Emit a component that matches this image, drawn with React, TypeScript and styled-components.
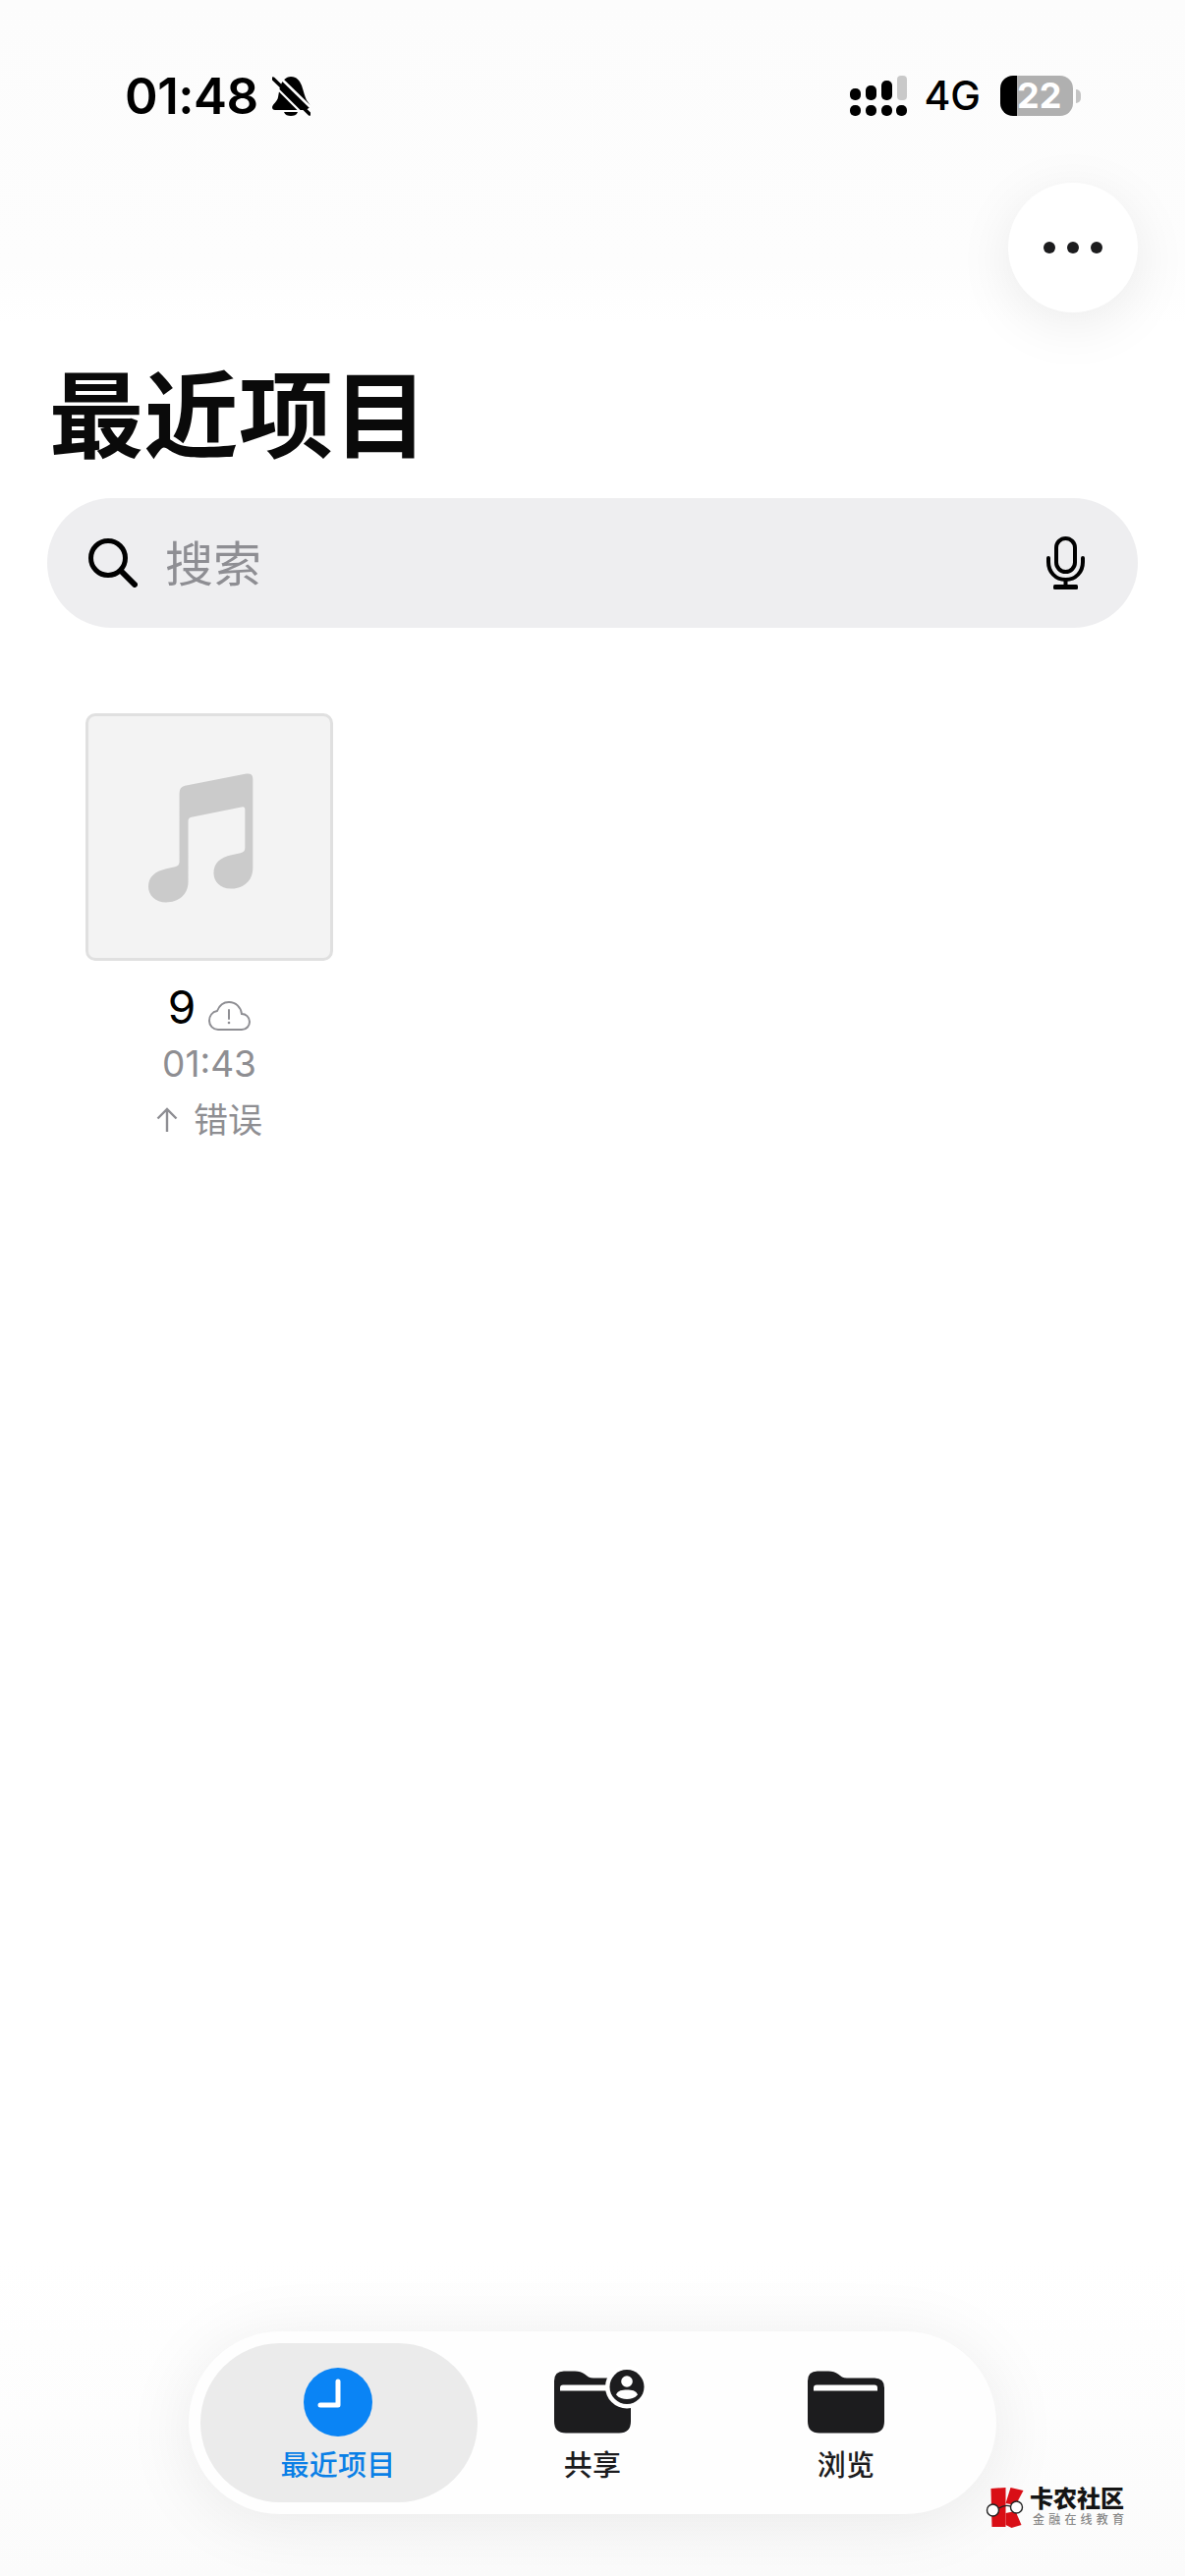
import React from "react";
import styled, { createGlobalStyle } from "styled-components";

const GlobalStyle = createGlobalStyle`
  html, body {
    margin: 0;
    padding: 0;
    background: #fff;
  }
`;

const CJK = `Inter, "Noto Sans CJK SC", sans-serif`;

const Page = styled.div`
  position: relative;
  width: 1206px;
  height: 2622px;
  overflow: hidden;
  display: flex;
  flex-direction: column;
  font-family: ${CJK};
  color: #000;
  background:
    linear-gradient(#fcfcfc 0, #fdfdfd 270px, #fff 330px, #fff 2300px, #fbfbfb 2622px);
`;

const StatusBar = styled.div`
  display: flex;
  align-items: center;
  height: 41px;
  margin-top: 77px;
  padding: 0 106px 0 127px;
`;

const Time = styled.span`
  font-size: 51px;
  line-height: 41px;
  font-weight: 600;
  letter-spacing: -0.5px;
`;

const BellIcon = styled.svg`
  width: 39px;
  height: 41px;
  margin-left: 14px;
`;

const StatusRight = styled.div`
  display: flex;
  align-items: center;
  margin-left: auto;
`;

const SignalIcon = styled.svg`
  width: 58px;
  height: 41px;
`;

const Network = styled.span`
  font-size: 41px;
  line-height: 41px;
  font-weight: 500;
  margin: 0 20px 0 17px;
`;

const Battery = styled.div`
  display: flex;
  align-items: center;
  justify-content: flex-start;
  width: 74px;
  height: 41px;
  padding-left: 17px;
  box-sizing: border-box;
  border-radius: 13px;
  background: linear-gradient(90deg, #000 17px, #b0b0b0 17px);
  color: #fff;
  font-size: 36px;
  line-height: 41px;
  font-weight: 700;
`;

const BatteryNub = styled.div`
  width: 5px;
  height: 14px;
  margin-left: 3px;
  border-radius: 0 7px 7px 0;
  background: #c4c4c4;
`;

const ActionRow = styled.div`
  display: flex;
  justify-content: flex-end;
  margin-top: 68px;
  padding-right: 48px;
`;

const MoreButton = styled.div`
  display: flex;
  align-items: center;
  justify-content: center;
  gap: 12px;
  width: 132px;
  height: 132px;
  border-radius: 50%;
  background: #fff;
  box-shadow: 0 12px 56px rgba(0, 0, 0, 0.08);
`;

const Dot = styled.span`
  width: 12px;
  height: 12px;
  border-radius: 50%;
  background: #1c1c1e;
`;

const Title = styled.h1`
  margin: 56px 0 0 50px;
  font-size: 96px;
  line-height: 98px;
  font-weight: 700;
  color: #0a0a0a;
  letter-spacing: 0.5px;
`;

const SearchBar = styled.div`
  display: flex;
  align-items: center;
  height: 132px;
  margin: 35px 48px 0;
  padding: 0 54px 0 42px;
  border-radius: 66px;
  background: #eeeef0;
`;

const SearchIcon = styled.svg`
  width: 50px;
  height: 50px;
  flex: none;
`;

const SearchText = styled.span`
  margin: 4px 0 0 28px;
  font-size: 49px;
  line-height: 60px;
  color: #8e8e93;
`;

const MicIcon = styled.svg`
  width: 39px;
  height: 54px;
  margin-left: auto;
`;

const FileGrid = styled.div`
  display: flex;
  padding: 87px 0 0 87px;
`;

const FileTile = styled.div`
  display: flex;
  flex-direction: column;
  align-items: center;
  width: 252px;
`;

const Thumb = styled.div`
  display: flex;
  align-items: center;
  justify-content: center;
  width: 252px;
  height: 252px;
  box-sizing: border-box;
  padding: 2px 18px 0 0;
  border: 3px solid #e0e0e0;
  border-radius: 10px;
  background: #f3f3f3;
`;

const NoteIcon = styled.svg`
  width: 107px;
  height: 132px;
`;

const FileName = styled.div`
  display: flex;
  align-items: center;
  margin-top: 21px;
  height: 52px;
  font-size: 46px;
  line-height: 52px;
`;

const CloudIcon = styled.svg`
  width: 43px;
  height: 30px;
  margin: 18px 0 0 13px;
`;

const Meta = styled.div`
  display: flex;
  align-items: center;
  font-size: 37px;
  line-height: 50px;
  color: #8e8e92;
  margin-top: 7px;
`;

const ErrorText = styled.span`
  font-size: 35px;
`;

const UpArrow = styled.svg`
  width: 22px;
  height: 26px;
  margin-right: 16px;
`;

const TabBar = styled.nav`
  display: grid;
  grid-template-columns: 282px 234px 282px;
  align-self: center;
  width: 822px;
  height: 186px;
  box-sizing: border-box;
  margin-top: auto;
  margin-bottom: 63px;
  padding: 12px;
  border-radius: 93px;
  background: #fefefe;
  box-shadow: 0 8px 70px rgba(0, 0, 0, 0.08);
`;

const Tab = styled.div<{ $active?: boolean }>`
  display: flex;
  flex-direction: column;
  align-items: center;
  padding: 25px ${({ $active }) => ($active ? "2px" : "0")} 0 0;
  border-radius: 81px;
  background: ${({ $active }) => ($active ? "#ebebeb" : "transparent")};
  color: ${({ $active }) => ($active ? "#0a7fe6" : "#1c1c1e")};
`;

const TabIcon = styled.svg`
  height: 70px;
  overflow: visible;
`;

const TabLabel = styled.span`
  margin-top: 13px;
  font-size: 29px;
  line-height: 34px;
  font-weight: 500;
  letter-spacing: 0.3px;
`;

const Watermark = styled.div`
  position: absolute;
  left: 1002px;
  top: 2532px;
  display: flex;
`;

const WatermarkLogo = styled.svg`
  width: 42px;
  height: 41px;
  flex: none;
`;

const WatermarkText = styled.div`
  display: flex;
  flex-direction: column;
  margin-left: 4px;
`;

const WatermarkName = styled.span`
  font-size: 24px;
  line-height: 24px;
  font-weight: 900;
  color: #151515;
`;

const WatermarkSub = styled.span`
  margin: 2px 0 0 3px;
  font-size: 12px;
  line-height: 14px;
  letter-spacing: 4.2px;
  font-weight: 500;
  color: #888;
  white-space: nowrap;
`;

const FolderShape = () => (
  <path
    d="M0 10 Q0 0 10 0 H21 Q27 0 31 3 L35 6 Q37 7 40 7 H68 Q78 7 78 17 V51 Q78 63 66 63 H12 Q0 63 0 51 Z"
    fill="#1c1c1e"
  />
);

const FolderStrip = () => <path d="M6 20 V17 Q6 14 9 14 H68 Q71 14 71 17 V20 Z" fill="#fff" />;

const ClockTabIcon = () => (
  <TabIcon width="70" viewBox="0 0 70 70">
    <circle cx="35" cy="35" r="35" fill="#0a84f5" />
    <path d="M35 14 V38 H17" fill="none" stroke="#fff" strokeWidth="5" strokeLinecap="round" strokeLinejoin="round" />
  </TabIcon>
);

const SharedTabIcon = () => (
  <TabIcon width="78" viewBox="0 -3.5 78 70">
    <FolderShape />
    <FolderStrip />
    <circle cx="74" cy="16" r="22" fill="#fff" />
    <circle cx="74" cy="16" r="17.5" fill="#1c1c1e" />
    <circle cx="74" cy="10.5" r="5.8" fill="#fff" />
    <path d="M63 24 C65 19.5 69 19 74 19 C79 19 83 19.5 85 24 C82 27.5 78 28.5 74 28.5 C70 28.5 66 27.5 63 24 Z" fill="#fff" />
  </TabIcon>
);

const BrowseTabIcon = () => (
  <TabIcon width="78" viewBox="0 -3.5 78 70">
    <FolderShape />
    <FolderStrip />
  </TabIcon>
);

const TABS = [
  { text: "最近项目", Icon: ClockTabIcon, active: true },
  { text: "共享", Icon: SharedTabIcon, active: false },
  { text: "浏览", Icon: BrowseTabIcon, active: false }
];

const SIGNAL_DOTS = [0, 16, 32, 47];

const App = () => {
  return (
    <Page>
      <GlobalStyle />

      <StatusBar>
        <Time>01:48</Time>
        <BellIcon viewBox="0 0 39 41">
          <path
            d="M19 1 C25 1 28 5 30 10 C32 16 33 21 35 25 C37 28 39 30 39 32 L34 35 H3 C1 35 0 34 0 32 C1 28 5 27 6 22 C7 17 7 13 9 9 C11 4 15 1 19 1 Z"
            fill="#000"
          />
          <path d="M12 37 H26 C25 40 22 41 19 41 C16 41 13 40 12 37 Z" fill="#000" />
          <path d="M3 -3 L42 35" stroke="#fff" strokeWidth="2.6" />
          <path d="M1 3 L38 39" stroke="#000" strokeWidth="3.4" strokeLinecap="round" />
          <path d="M-2 6 L34 42" stroke="#fff" strokeWidth="2.2" />
        </BellIcon>
        <StatusRight>
          <SignalIcon viewBox="0 0 58 41">
            <rect x="0" y="13" width="11" height="12" rx="5" fill="#000" />
            <rect x="16" y="10" width="11" height="15" rx="5" fill="#000" />
            <rect x="32" y="5" width="11" height="20" rx="5" fill="#000" />
            <rect x="48" y="0" width="10" height="25" rx="4" fill="#c9c9c9" />
            {SIGNAL_DOTS.map((x) => (
              <rect key={x} x={x} y="30" width="11" height="11" rx="5" fill="#000" />
            ))}
          </SignalIcon>
          <Network>4G</Network>
          <Battery>22</Battery>
          <BatteryNub />
        </StatusRight>
      </StatusBar>

      <ActionRow>
        <MoreButton>
          <Dot />
          <Dot />
          <Dot />
        </MoreButton>
      </ActionRow>

      <Title>最近项目</Title>

      <SearchBar>
        <SearchIcon viewBox="0 0 50 50">
          <circle cx="20" cy="20" r="17.5" fill="none" stroke="#000" strokeWidth="5" />
          <path d="M33 33 L47 47" stroke="#000" strokeWidth="6" strokeLinecap="round" />
        </SearchIcon>
        <SearchText>搜索</SearchText>
        <MicIcon viewBox="0 0 39 54">
          <rect x="10" y="2" width="19" height="34" rx="9.5" fill="none" stroke="#000" strokeWidth="4" />
          <path d="M2 22 V26 C2 36 9 44 19.5 44 C30 44 37 36 37 26 V22" fill="none" stroke="#000" strokeWidth="4" strokeLinecap="round" />
          <path d="M19.5 44 V50" stroke="#000" strokeWidth="4" />
          <rect x="7" y="49" width="25" height="5" rx="1.5" fill="#000" />
        </MicIcon>
      </SearchBar>

      <FileGrid>
        <FileTile>
          <Thumb>
            <NoteIcon viewBox="270 260 322 396">
              <path
                d="M365 320 Q365 302 382 298 L570 261 Q590 258 590 278 L590 550 C590 590 560 613 522 613 C490 613 470 592 470 565 C470 535 490 517 525 510 L552 504 Q566 501 566 488 L566 372 Q566 360 555 363 L402 394 Q392 396 392 406 L392 592 C392 632 362 655 324 655 C292 655 270 634 270 607 C270 577 290 560 325 552 L352 546 Q365 543 365 530 Z"
                fill="#cbcbcb"
              />
            </NoteIcon>
          </Thumb>
          <FileName>
            9
            <CloudIcon viewBox="0 0 43 30">
              <path
                d="M10 29 H34 C39 29 42 25 42 21 C42 16 38 13 34 13 C33 6 28 1 21 1 C15 1 11 5 9 10 C4 11 1 15 1 20 C1 25 5 29 10 29 Z"
                fill="none"
                stroke="#8e8e93"
                strokeWidth="2"
              />
              <path d="M21 9 V18" stroke="#8e8e93" strokeWidth="2" strokeLinecap="round" />
              <circle cx="21" cy="22" r="1.3" fill="#8e8e93" />
            </CloudIcon>
          </FileName>
          <Meta>01:43</Meta>
          <Meta>
            <UpArrow viewBox="0 0 22 26">
              <path d="M11 25 V2 M1.5 11.5 L11 2 L20.5 11.5" fill="none" stroke="#8e8e93" strokeWidth="2.4" />
            </UpArrow>
            <ErrorText>错误</ErrorText>
          </Meta>
        </FileTile>
      </FileGrid>

      <TabBar>
        {TABS.map((item) => (
          <Tab key={item.text} $active={item.active}>
            <item.Icon />
            <TabLabel>{item.text}</TabLabel>
          </Tab>
        ))}
      </TabBar>

      <Watermark>
        <WatermarkLogo viewBox="0 0 41 41">
          <path d="M6 1 L21 0 L21 40 L7 40 Z" fill="#d90f16" />
          <path d="M26 0 L39 3 L31 18 L21 16 Z" fill="#d90f16" />
          <path d="M21 26 L31 24 L37 38 L27 41 L21 38 Z" fill="#d90f16" />
          <circle cx="8" cy="23" r="6" fill="#fff" stroke="#222" strokeWidth="1.4" />
          <circle cx="32" cy="20" r="6" fill="#fff" stroke="#222" strokeWidth="1.4" />
          <path d="M14 21 Q20 17 26 19" fill="none" stroke="#222" strokeWidth="1.4" />
        </WatermarkLogo>
        <WatermarkText>
          <WatermarkName>卡农社区</WatermarkName>
          <WatermarkSub>金融在线教育</WatermarkSub>
        </WatermarkText>
      </Watermark>
    </Page>
  );
};

export default App;
